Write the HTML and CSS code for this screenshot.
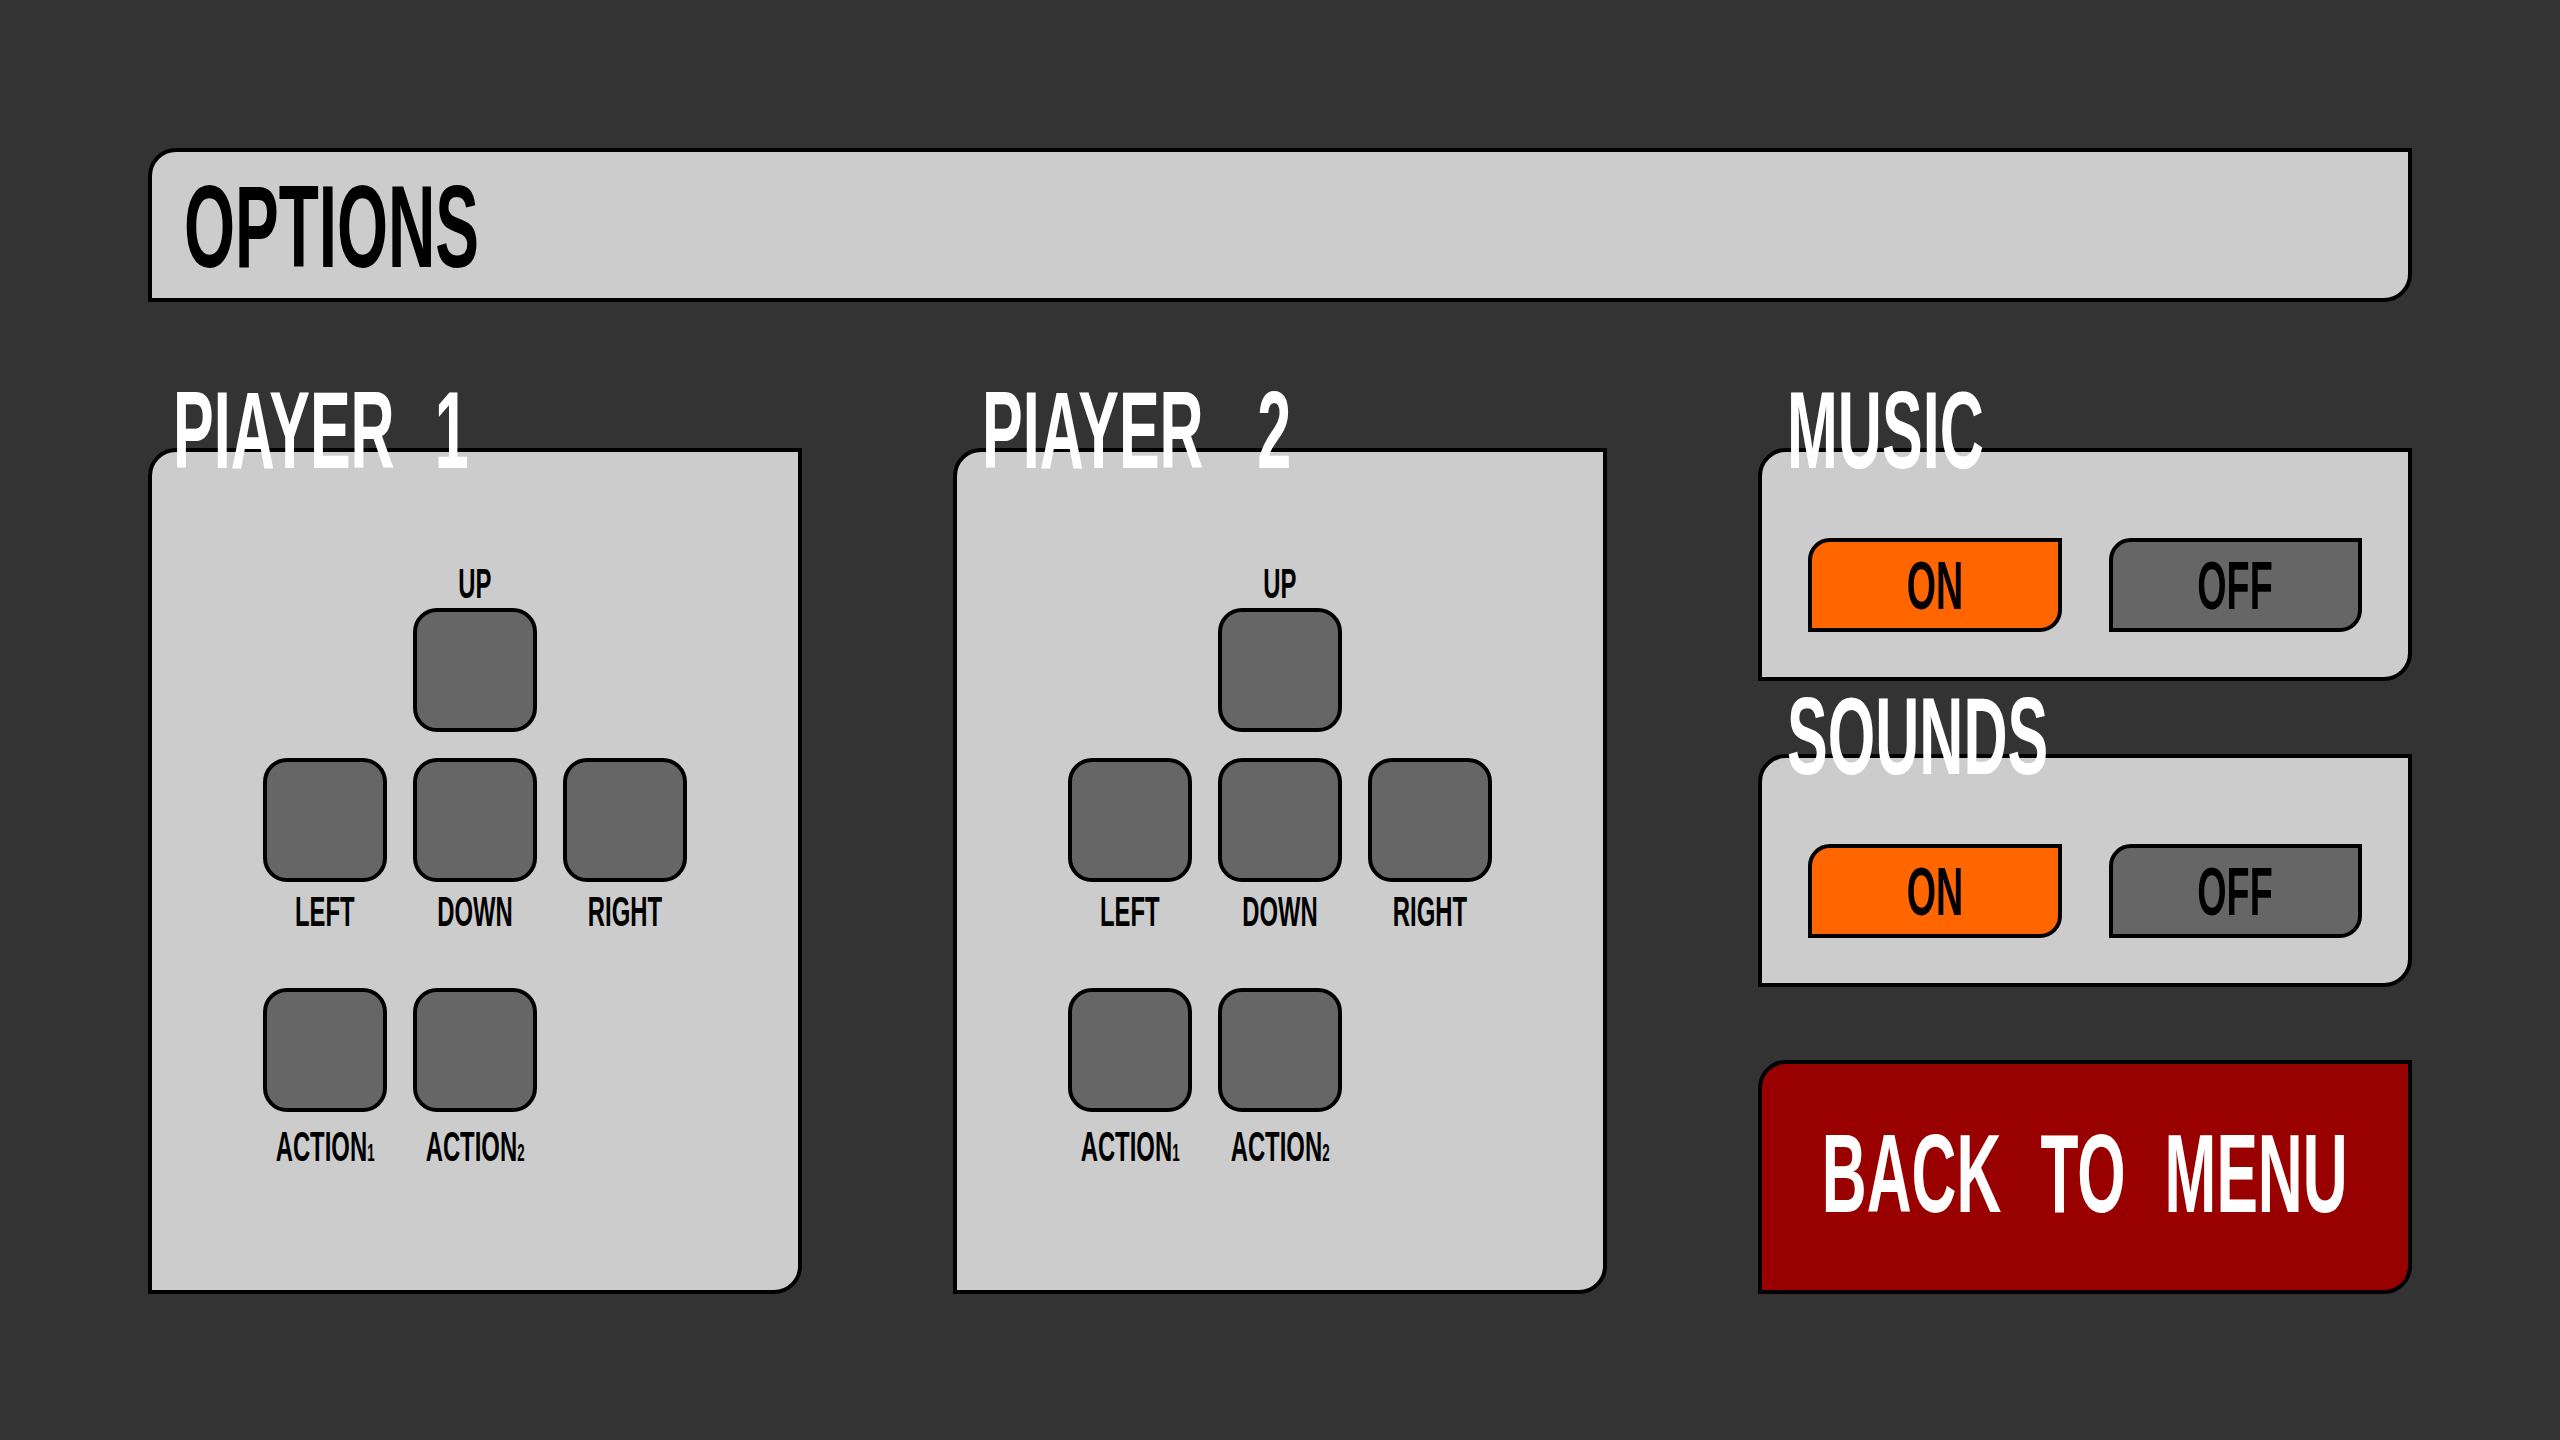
FILE: index.html
```html
<!DOCTYPE html>
<html lang="en">
<head>
<meta charset="utf-8">
<title>Options</title>
<link rel="stylesheet" href="styles.css">
</head>
<body>
<div class="screen">
  <header class="header">
    <h1 class="header-title"><span class="cond cond-l cond-wide">OPTIONS</span></h1>
  </header>
  <main class="columns">
    <section class="col">
      <h2 class="title title-player"><span class="cond cond-l">PIAYER 1</span></h2>
      <div class="panel player-panel">
        <div class="pad">
          <div class="row row-center"><div class="label"><span class="cond">UP</span></div></div>
          <div class="row row-center row-upkey"><div class="key"></div></div>
          <div class="row row-dir"><div class="key"></div><div class="key"></div><div class="key"></div></div>
          <div class="row row-dirlabels">
            <div class="label"><span class="cond">LEFT</span></div>
            <div class="label"><span class="cond">DOWN</span></div>
            <div class="label"><span class="cond">RIGHT</span></div>
          </div>
          <div class="row row-action"><div class="key"></div><div class="key"></div></div>
          <div class="row row-actionlabels">
            <div class="label"><span class="cond">ACTION<span class="digit">1</span></span></div>
            <div class="label"><span class="cond">ACTION<span class="digit">2</span></span></div>
          </div>
        </div>
      </div>
    </section>
    <section class="col">
      <h2 class="title title-player title-p2"><span class="cond cond-l">PIAYER 2</span></h2>
      <div class="panel player-panel">
        <div class="pad">
          <div class="row row-center"><div class="label"><span class="cond">UP</span></div></div>
          <div class="row row-center row-upkey"><div class="key"></div></div>
          <div class="row row-dir"><div class="key"></div><div class="key"></div><div class="key"></div></div>
          <div class="row row-dirlabels">
            <div class="label"><span class="cond">LEFT</span></div>
            <div class="label"><span class="cond">DOWN</span></div>
            <div class="label"><span class="cond">RIGHT</span></div>
          </div>
          <div class="row row-action"><div class="key"></div><div class="key"></div></div>
          <div class="row row-actionlabels">
            <div class="label"><span class="cond">ACTION<span class="digit">1</span></span></div>
            <div class="label"><span class="cond">ACTION<span class="digit">2</span></span></div>
          </div>
        </div>
      </div>
    </section>
    <section class="col">
      <h2 class="title title-side"><span class="cond cond-l">MUSIC</span></h2>
      <div class="panel switch-panel">
        <div class="toggle toggle-on"><span class="cond">ON</span></div>
        <div class="toggle toggle-off"><span class="cond">OFF</span></div>
      </div>
      <h2 class="title title-side"><span class="cond cond-l">SOUNDS</span></h2>
      <div class="panel switch-panel">
        <div class="toggle toggle-on"><span class="cond">ON</span></div>
        <div class="toggle toggle-off"><span class="cond">OFF</span></div>
      </div>
      <div class="back-btn"><span class="cond">BACK TO MENU</span></div>
    </section>
  </main>
</div>
</body>
</html>
```

FILE: styles.css
```css
* {
  box-sizing: border-box;
  margin: 0;
  padding: 0;
}

html,
body {
  background: #333333;
}

body {
  width: 2560px;
  height: 1440px;
  overflow: hidden;
  font-family: "Liberation Sans", Arial, sans-serif;
  font-weight: 700;
}

.screen {
  padding: 148px;
  display: flex;
  flex-direction: column;
}

.cond {
  display: inline-block;
  white-space: nowrap;
  transform: scaleX(0.555);
  transform-origin: center center;
}

.cond-l {
  transform-origin: left center;
}

.cond-wide {
  transform: scaleX(0.565);
}

.header {
  height: 154px;
  background: #cccccc;
  border: 4px solid #000000;
  border-radius: 28px 0 28px 0;
  display: flex;
  align-items: center;
  padding: 3px 0 0 32px;
}

.header-title {
  font-size: 116px;
  line-height: 116px;
  font-weight: 700;
  color: #000000;
}

.columns {
  margin-top: 73px;
  display: grid;
  grid-template-columns: repeat(3, minmax(0, 1fr));
  column-gap: 151px;
}

.col {
  display: flex;
  flex-direction: column;
  min-width: 0;
}

.title {
  position: relative;
  z-index: 1;
  height: 110px;
  font-size: 110px;
  line-height: 110px;
  font-weight: 700;
  color: #ffffff;
  word-spacing: 0.38em;
  white-space: nowrap;
}

.title-player {
  padding-left: 25px;
}

.title-p2 {
  padding-left: 29px;
  word-spacing: 0.6em;
}

.title-side {
  padding-left: 29px;
}

.panel {
  background: #cccccc;
  border: 4px solid #000000;
  border-radius: 28px 0 28px 0;
  margin-top: -37px;
}

.player-panel {
  flex: 1;
  padding-top: 110px;
  display: flex;
  flex-direction: column;
  align-items: center;
}

.pad {
  width: 424px;
  display: flex;
  flex-direction: column;
}

.row {
  display: flex;
  gap: 26px;
}

.row-center {
  justify-content: center;
}

.row-upkey {
  margin-top: 3px;
}

.row-dir {
  margin-top: 26px;
}

.row-dirlabels {
  margin-top: 8px;
}

.row-action {
  margin-top: 55px;
}

.row-actionlabels {
  margin-top: 13px;
}

.key {
  width: 124px;
  height: 124px;
  background: #666666;
  border: 4px solid #000000;
  border-radius: 24px;
}

.label {
  width: 124px;
  height: 43px;
  display: flex;
  justify-content: center;
  font-size: 43px;
  line-height: 43px;
  color: #000000;
}

.digit {
  font-size: 24px;
}

.switch-panel {
  height: 233px;
  display: flex;
  gap: 47px;
  padding: 86px 46px 45px;
}

.toggle {
  flex: 1 1 0;
  min-width: 0;
  height: 94px;
  border: 4px solid #000000;
  border-radius: 22px 0 22px 0;
  display: flex;
  align-items: center;
  justify-content: center;
  font-size: 68px;
  line-height: 68px;
  color: #000000;
}

.toggle-on {
  background: #ff6600;
}

.toggle-off {
  background: #666666;
}

.back-btn {
  margin-top: 73px;
  height: 234px;
  min-width: 0;
  background: #990000;
  border: 4px solid #000000;
  border-radius: 28px 0 28px 0;
  display: flex;
  align-items: center;
  justify-content: center;
  padding-bottom: 6px;
  font-size: 112px;
  line-height: 112px;
  color: #ffffff;
  word-spacing: 0.35em;
}
```
